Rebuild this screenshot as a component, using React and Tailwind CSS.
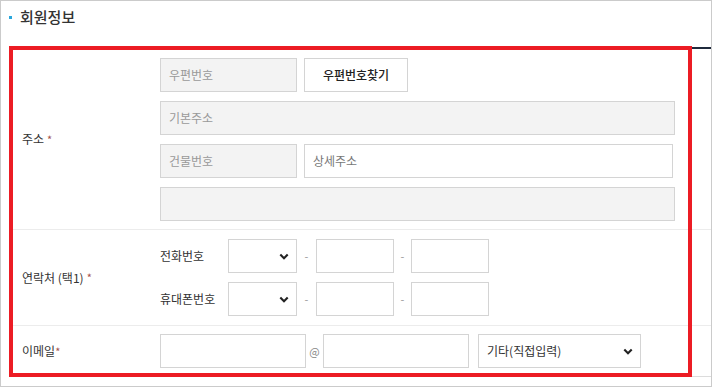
import React from 'react';

const font = { fontFamily: '"Noto Sans CJK KR", "Noto Sans", sans-serif' };

// small bold chevron used inside the select boxes
const Chevron = () => (
    <svg width="10" height="7" viewBox="0 0 10 7" className="shrink-0">
        <path d="M1.3 1.5 L5 5.2 L8.7 1.5" fill="none" stroke="#222" strokeWidth="2.1" />
    </svg>
);

const GrayBox = ({ w, text }) => (
    <div className={`${w} h-[34px] bg-[#f3f3f3] border border-[#d4d4d4] flex items-center px-[8px] text-[12px] text-[#999]`}>
        {text}
    </div>
);

const WhiteBox = ({ w, text, cls = '' }) => (
    <div className={`${w} h-[34px] bg-white border border-[#d4d4d4] flex items-center px-[8px] text-[12px] ${cls}`}>
        {text}
    </div>
);

const SelectBox = ({ w, text = '' }) => (
    <div className={`${w} h-[34px] bg-white border border-[#d4d4d4] flex items-center justify-between pl-[8px] pr-[7px] text-[12px] text-[#333]`}>
        <span>{text}</span>
        <Chevron />
    </div>
);

const Star = () => <span className="text-[#a5524c] ml-[3px] text-[11px]">*</span>;

const PhoneRow = ({ label }) => (
    <div className="flex items-center h-[34px]">
        <div className="w-[68px] text-[12px] text-[#333]">{label}</div>
        <SelectBox w="w-[69px]" />
        <span className="w-[19px] text-center text-[11px] text-[#999]">-</span>
        <WhiteBox w="w-[78px]" />
        <span className="w-[17px] text-center text-[11px] text-[#999]">-</span>
        <WhiteBox w="w-[78px]" />
    </div>
);

export default function App() {
    return (
        <div className="w-[712px] h-[388px] bg-white relative" style={font}>
            <div className="h-[387px] border border-[#cbcbcb] pl-[8px]">
                {/* title */}
                <div className="flex items-center h-[20px] mt-[6px]">
                    <span className="w-[3px] h-[3px] bg-[#2aa7dc] mr-[8px] mt-[1px]"></span>
                    <span className="text-[15px] font-medium text-[#333] leading-[20px]">회원정보</span>
                </div>

                {/* table */}
                <div className="mt-[20px] border-t-2 border-[#1f2a3c] border-b border-b-[#dcdcdc]">
                    {/* 주소 */}
                    <div className="flex border-b border-[#ececec]">
                        <div className="w-[151px] pl-[13px] flex items-center text-[12px] text-[#333]">
                            주소<Star />
                        </div>
                        <div className="flex flex-col gap-[9px] pt-[9px] pb-[8px]">
                            <div className="flex gap-[7px]">
                                <GrayBox w="w-[137px]" text="우편번호" />
                                <div className="w-[104px] h-[34px] bg-white border border-[#d4d4d4] flex items-center justify-center text-[12px] font-medium text-[#222]">
                                    우편번호찾기
                                </div>
                            </div>
                            <GrayBox w="w-[515px]" text="기본주소" />
                            <div className="flex gap-[7px]">
                                <GrayBox w="w-[137px]" text="건물번호" />
                                <WhiteBox w="w-[369px]" text="상세주소" cls="text-[#777]" />
                            </div>
                            <GrayBox w="w-[515px]" text="" />
                        </div>
                    </div>

                    {/* 연락처 */}
                    <div className="flex border-b border-[#ececec]">
                        <div className="w-[151px] pl-[13px] flex items-center text-[12px] text-[#333]">
                            연락처 (택1)<Star />
                        </div>
                        <div className="flex flex-col gap-[9px] py-[9px]">
                            <PhoneRow label="전화번호" />
                            <PhoneRow label="휴대폰번호" />
                        </div>
                    </div>

                    {/* 이메일 */}
                    <div className="flex">
                        <div className="w-[151px] pl-[13px] flex items-center text-[12px] text-[#333]">
                            이메일<span className="text-[#a5524c] text-[11px]">*</span>
                        </div>
                        <div className="flex items-center py-[8px]">
                            <WhiteBox w="w-[146px]" />
                            <span className="w-[17px] text-center text-[11px] text-[#888]">@</span>
                            <WhiteBox w="w-[146px]" />
                            <div className="w-[9px]"></div>
                            <SelectBox w="w-[163px]" text="기타(직접입력)" />
                        </div>
                    </div>
                </div>
            </div>

            {/* red highlight annotation */}
            <div className="absolute left-[9px] top-[46px] w-[683px] h-[331px] border-4 border-[#ec1c24] pointer-events-none"></div>
        </div>
    );
}
